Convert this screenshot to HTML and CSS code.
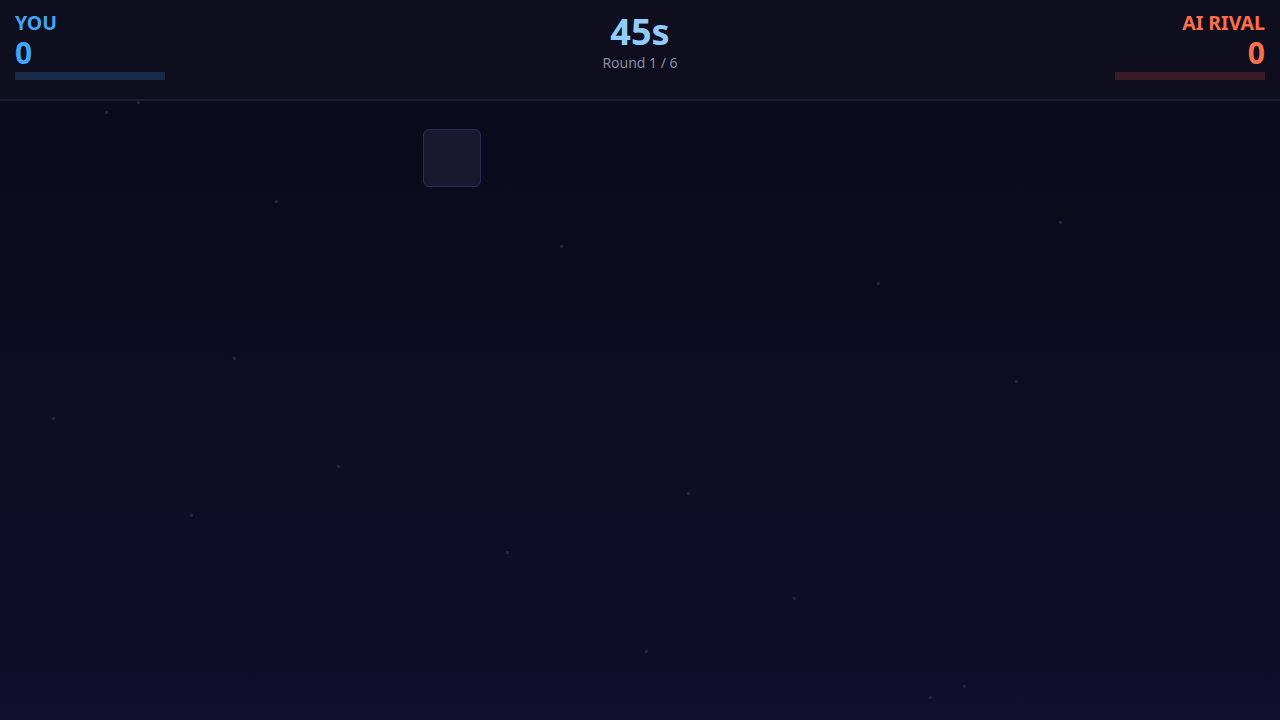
FILE: index.html
```html
<!DOCTYPE html>
<html lang="en">
<head>
<meta charset="UTF-8">
<meta name="viewport" content="width=device-width, initial-scale=1.0">
<link rel="stylesheet" href="styles.css">
</head>
<body>
<div class="game">
    <div class="stars">
        <span class="star" style="left:105px;top:111px"></span>
        <span class="star" style="left:137px;top:101px"></span>
        <span class="star" style="left:275px;top:200px"></span>
        <span class="star" style="left:560px;top:245px"></span>
        <span class="star" style="left:233px;top:357px"></span>
        <span class="star" style="left:52px;top:417px"></span>
        <span class="star" style="left:877px;top:282px"></span>
        <span class="star" style="left:1059px;top:221px"></span>
        <span class="star" style="left:1015px;top:380px"></span>
        <span class="star" style="left:687px;top:492px"></span>
        <span class="star" style="left:190px;top:514px"></span>
        <span class="star" style="left:506px;top:551px"></span>
        <span class="star" style="left:337px;top:465px"></span>
        <span class="star" style="left:793px;top:597px"></span>
        <span class="star" style="left:645px;top:650px"></span>
        <span class="star" style="left:929px;top:696px"></span>
        <span class="star" style="left:963px;top:685px"></span>
    </div>

    <div class="hud">
        <div class="player you">
            <div class="name">YOU</div>
            <div class="score">0</div>
            <div class="bar"></div>
        </div>
        <div class="center">
            <div class="timer">45s</div>
            <div class="round">Round 1 / 6</div>
        </div>
        <div class="player rival">
            <div class="name">AI RIVAL</div>
            <div class="score">0</div>
            <div class="bar"></div>
        </div>
    </div>

    <div class="board">
        <div class="tile" style="left:423px;top:28px"></div>
    </div>
</div>
</body>
</html>
```

FILE: styles.css
```css
* {
  box-sizing: border-box;
}

body {
  margin: 0;
  font-family: "Noto Sans", "Open Sans", sans-serif;
  background: #0a0a1a;
}

.game {
  position: relative;
  width: 1280px;
  height: 720px;
  overflow: hidden;
  background: linear-gradient(to bottom, #0a0a1a 0%, #0d0d24 60%, #0f0f2e 100%);
}

.stars {
  position: absolute;
  inset: 0;
}

.star {
  position: absolute;
  width: 3px;
  height: 3px;
  border-radius: 50%;
  background: #25254a;
  box-shadow: 0 0 2px #1c1c3c;
}

.hud {
  position: relative;
  display: flex;
  justify-content: space-between;
  align-items: flex-start;
  height: 101px;
  padding: 10px 15px 0;
  background: #0e0e1f;
  border-bottom: 2px solid #1c1c34;
}

.player {
  display: flex;
  flex-direction: column;
  width: 150px;
}

.rival {
  align-items: flex-end;
}

.name {
  font-size: 19.5px;
  font-weight: bold;
  line-height: 26px;
}

.score {
  margin-top: 1px;
  font-size: 30px;
  font-weight: bold;
  line-height: 32px;
}

.bar {
  width: 150px;
  height: 8px;
  margin-top: 3px;
}

.you .name,
.you .score {
  color: #42a5f5;
}

.you .bar {
  background: #172a4a;
}

.rival .name,
.rival .score {
  color: #ff6e4a;
}

.rival .bar {
  background: #3a1b28;
}

.center {
  display: flex;
  flex-direction: column;
  align-items: center;
  padding-top: 2px;
}

.timer {
  font-size: 36px;
  font-weight: bold;
  line-height: 40px;
  color: #90cdfc;
}

.round {
  font-size: 14px;
  line-height: 22px;
  color: #8a8aa8;
}

.board {
  position: relative;
  height: 619px;
}

.tile {
  position: absolute;
  width: 58px;
  height: 58px;
  border-radius: 6px;
  background: #19182f;
  border: 1px solid #2d2a58;
}
```
